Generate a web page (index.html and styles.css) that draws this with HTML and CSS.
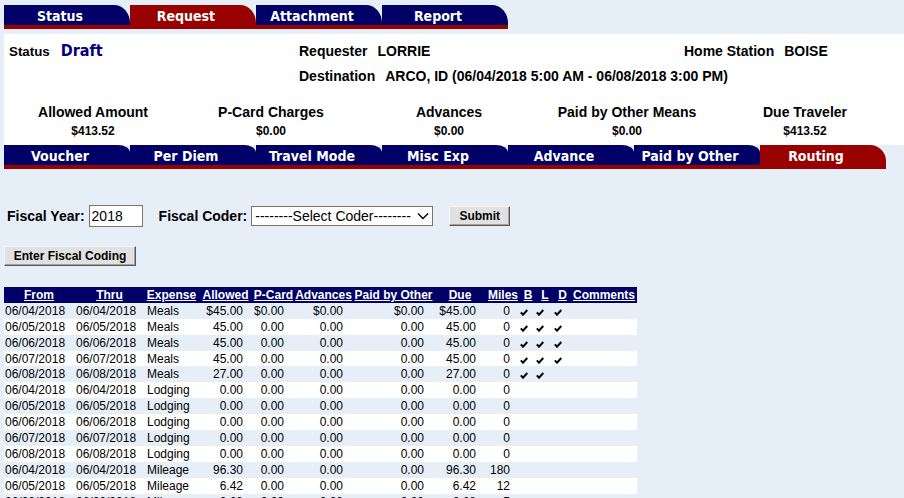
FILE: index.html
```html
<!DOCTYPE html>
<html>
<head>
<meta charset="utf-8">
<title>Travel Request</title>
<link rel="stylesheet" href="styles.css">
</head>
<body>
<nav class="tabs top-tabs">
  <a class="tab">Status</a>
  <a class="tab active">Request</a>
  <a class="tab">Attachment</a>
  <a class="tab">Report</a>
</nav>

<section class="panel">
  <div class="info">
    <div class="status"><span class="status-lbl">Status</span><span class="draft">Draft</span></div>
    <div class="field"><span>Requester</span><span class="val">LORRIE</span></div>
    <div class="field"><span>Home Station</span><span class="val">BOISE</span></div>
    <div></div>
    <div class="field dest"><span>Destination</span><span class="val">ARCO, ID (06/04/2018 5:00 AM - 06/08/2018 3:00 PM)</span></div>
  </div>
  <div class="summary">
    <div class="sum"><div class="sum-lbl">Allowed Amount</div><div class="sum-val">$413.52</div></div>
    <div class="sum"><div class="sum-lbl">P-Card Charges</div><div class="sum-val">$0.00</div></div>
    <div class="sum"><div class="sum-lbl">Advances</div><div class="sum-val">$0.00</div></div>
    <div class="sum"><div class="sum-lbl">Paid by Other Means</div><div class="sum-val">$0.00</div></div>
    <div class="sum"><div class="sum-lbl">Due Traveler</div><div class="sum-val">$413.52</div></div>
  </div>
</section>

<nav class="tabs sub-tabs">
  <a class="tab">Voucher</a>
  <a class="tab">Per Diem</a>
  <a class="tab">Travel Mode</a>
  <a class="tab">Misc Exp</a>
  <a class="tab">Advance</a>
  <a class="tab">Paid by Other</a>
  <a class="tab active">Routing</a>
</nav>

<form class="fiscal">
  <label class="flbl" for="fy">Fiscal Year:</label>
  <input id="fy" class="fy" type="text" value="2018">
  <label class="flbl coder-lbl" for="coder">Fiscal Coder:</label>
  <span class="select-wrap">
    <select id="coder" class="coder"><option>--------Select Coder--------</option></select>
    <svg class="chev" width="12" height="8" viewBox="0 0 12 8"><path d="M1 1.5 L6 6.5 L11 1.5" fill="none" stroke="#000" stroke-width="1.4"/></svg>
  </span>
  <button type="button" class="btn submit">Submit</button>
</form>

<button type="button" class="btn enter">Enter Fiscal Coding</button>

<table class="grid">
  <colgroup>
    <col style="width:70px"><col style="width:71px"><col style="width:53px"><col style="width:55px">
    <col style="width:41px"><col style="width:59px"><col style="width:81px"><col style="width:52px">
    <col style="width:34px"><col style="width:16px"><col style="width:18px"><col style="width:17px"><col style="width:66px">
  </colgroup>
  <thead>
    <tr>
      <th><a>From</a></th><th><a>Thru</a></th><th><a>Expense</a></th><th><a>Allowed</a></th>
      <th><a>P-Card</a></th><th><a>Advances</a></th><th><a>Paid by Other</a></th><th><a>Due</a></th>
      <th><a>Miles</a></th><th><a>B</a></th><th><a>L</a></th><th><a>D</a></th><th><a>Comments</a></th>
    </tr>
  </thead>
  <tbody>
    <tr><td class="d1">06/04/2018</td><td class="d2">06/04/2018</td><td class="t">Meals</td><td class="n">$45.00</td><td class="n">$0.00</td><td class="n">$0.00</td><td class="n">$0.00</td><td class="n">$45.00</td><td class="n">0</td><td class="c"><svg class="ck" width="8" height="7" viewBox="0 0 8 7"><path d="M0.8 3.4 L3 5.7 L7.3 1" fill="none" stroke="#000" stroke-width="2"/></svg></td><td class="c"><svg class="ck" width="8" height="7" viewBox="0 0 8 7"><path d="M0.8 3.4 L3 5.7 L7.3 1" fill="none" stroke="#000" stroke-width="2"/></svg></td><td class="c"><svg class="ck" width="8" height="7" viewBox="0 0 8 7"><path d="M0.8 3.4 L3 5.7 L7.3 1" fill="none" stroke="#000" stroke-width="2"/></svg></td><td></td></tr>
    <tr><td class="d1">06/05/2018</td><td class="d2">06/05/2018</td><td class="t">Meals</td><td class="n">45.00</td><td class="n">0.00</td><td class="n">0.00</td><td class="n">0.00</td><td class="n">45.00</td><td class="n">0</td><td class="c"><svg class="ck" width="8" height="7" viewBox="0 0 8 7"><path d="M0.8 3.4 L3 5.7 L7.3 1" fill="none" stroke="#000" stroke-width="2"/></svg></td><td class="c"><svg class="ck" width="8" height="7" viewBox="0 0 8 7"><path d="M0.8 3.4 L3 5.7 L7.3 1" fill="none" stroke="#000" stroke-width="2"/></svg></td><td class="c"><svg class="ck" width="8" height="7" viewBox="0 0 8 7"><path d="M0.8 3.4 L3 5.7 L7.3 1" fill="none" stroke="#000" stroke-width="2"/></svg></td><td></td></tr>
    <tr><td class="d1">06/06/2018</td><td class="d2">06/06/2018</td><td class="t">Meals</td><td class="n">45.00</td><td class="n">0.00</td><td class="n">0.00</td><td class="n">0.00</td><td class="n">45.00</td><td class="n">0</td><td class="c"><svg class="ck" width="8" height="7" viewBox="0 0 8 7"><path d="M0.8 3.4 L3 5.7 L7.3 1" fill="none" stroke="#000" stroke-width="2"/></svg></td><td class="c"><svg class="ck" width="8" height="7" viewBox="0 0 8 7"><path d="M0.8 3.4 L3 5.7 L7.3 1" fill="none" stroke="#000" stroke-width="2"/></svg></td><td class="c"><svg class="ck" width="8" height="7" viewBox="0 0 8 7"><path d="M0.8 3.4 L3 5.7 L7.3 1" fill="none" stroke="#000" stroke-width="2"/></svg></td><td></td></tr>
    <tr><td class="d1">06/07/2018</td><td class="d2">06/07/2018</td><td class="t">Meals</td><td class="n">45.00</td><td class="n">0.00</td><td class="n">0.00</td><td class="n">0.00</td><td class="n">45.00</td><td class="n">0</td><td class="c"><svg class="ck" width="8" height="7" viewBox="0 0 8 7"><path d="M0.8 3.4 L3 5.7 L7.3 1" fill="none" stroke="#000" stroke-width="2"/></svg></td><td class="c"><svg class="ck" width="8" height="7" viewBox="0 0 8 7"><path d="M0.8 3.4 L3 5.7 L7.3 1" fill="none" stroke="#000" stroke-width="2"/></svg></td><td class="c"><svg class="ck" width="8" height="7" viewBox="0 0 8 7"><path d="M0.8 3.4 L3 5.7 L7.3 1" fill="none" stroke="#000" stroke-width="2"/></svg></td><td></td></tr>
    <tr><td class="d1">06/08/2018</td><td class="d2">06/08/2018</td><td class="t">Meals</td><td class="n">27.00</td><td class="n">0.00</td><td class="n">0.00</td><td class="n">0.00</td><td class="n">27.00</td><td class="n">0</td><td class="c"><svg class="ck" width="8" height="7" viewBox="0 0 8 7"><path d="M0.8 3.4 L3 5.7 L7.3 1" fill="none" stroke="#000" stroke-width="2"/></svg></td><td class="c"><svg class="ck" width="8" height="7" viewBox="0 0 8 7"><path d="M0.8 3.4 L3 5.7 L7.3 1" fill="none" stroke="#000" stroke-width="2"/></svg></td><td class="c"></td><td></td></tr>
    <tr><td class="d1">06/04/2018</td><td class="d2">06/04/2018</td><td class="t">Lodging</td><td class="n">0.00</td><td class="n">0.00</td><td class="n">0.00</td><td class="n">0.00</td><td class="n">0.00</td><td class="n">0</td><td></td><td></td><td></td><td></td></tr>
    <tr><td class="d1">06/05/2018</td><td class="d2">06/05/2018</td><td class="t">Lodging</td><td class="n">0.00</td><td class="n">0.00</td><td class="n">0.00</td><td class="n">0.00</td><td class="n">0.00</td><td class="n">0</td><td></td><td></td><td></td><td></td></tr>
    <tr><td class="d1">06/06/2018</td><td class="d2">06/06/2018</td><td class="t">Lodging</td><td class="n">0.00</td><td class="n">0.00</td><td class="n">0.00</td><td class="n">0.00</td><td class="n">0.00</td><td class="n">0</td><td></td><td></td><td></td><td></td></tr>
    <tr><td class="d1">06/07/2018</td><td class="d2">06/07/2018</td><td class="t">Lodging</td><td class="n">0.00</td><td class="n">0.00</td><td class="n">0.00</td><td class="n">0.00</td><td class="n">0.00</td><td class="n">0</td><td></td><td></td><td></td><td></td></tr>
    <tr><td class="d1">06/08/2018</td><td class="d2">06/08/2018</td><td class="t">Lodging</td><td class="n">0.00</td><td class="n">0.00</td><td class="n">0.00</td><td class="n">0.00</td><td class="n">0.00</td><td class="n">0</td><td></td><td></td><td></td><td></td></tr>
    <tr><td class="d1">06/04/2018</td><td class="d2">06/04/2018</td><td class="t">Mileage</td><td class="n">96.30</td><td class="n">0.00</td><td class="n">0.00</td><td class="n">0.00</td><td class="n">96.30</td><td class="n">180</td><td></td><td></td><td></td><td></td></tr>
    <tr><td class="d1">06/05/2018</td><td class="d2">06/05/2018</td><td class="t">Mileage</td><td class="n">6.42</td><td class="n">0.00</td><td class="n">0.00</td><td class="n">0.00</td><td class="n">6.42</td><td class="n">12</td><td></td><td></td><td></td><td></td></tr>
    <tr><td class="d1">06/06/2018</td><td class="d2">06/06/2018</td><td class="t">Mileage</td><td class="n">2.68</td><td class="n">0.00</td><td class="n">0.00</td><td class="n">0.00</td><td class="n">2.68</td><td class="n">5</td><td></td><td></td><td></td><td></td></tr>
  </tbody>
</table>
</body>
</html>
```

FILE: styles.css
```css
* { box-sizing: border-box; }
html, body { margin: 0; }
body {
  background: #e6eef8;
  font-family: "Liberation Sans", Arial, sans-serif;
  color: #000;
  padding: 5px 0 0 4px;
}

/* tab bars */
.tabs {
  display: flex;
  border-bottom: 4px solid #990000;
}
.top-tabs { width: 504px; }
.sub-tabs { width: 882px; }
.tab {
  width: 126px;
  height: 20px;
  flex: none;
  background: #000066;
  color: #fff;
  font-family: "DejaVu Sans Condensed", "DejaVu Sans", sans-serif;
  font-stretch: condensed;
  font-weight: bold;
  font-size: 14px;
  line-height: 22px;
  text-align: center;
  padding-right: 14px;
  text-decoration: none;
  white-space: nowrap;
}
.top-tabs .tab { border-top-right-radius: 16px 18px; }
.sub-tabs .tab { border-top-right-radius: 12px 8px; }
.tab.active { background: #990000; }
.sub-tabs .tab.active { border-top-right-radius: 16px 16px; }

/* white info panel */
.panel {
  background: #fff;
  margin-top: 5px;
}
.info {
  display: grid;
  grid-template-columns: 290px 385px auto;
  grid-template-rows: 33px 18px;
  align-items: center;
  padding-left: 5px;
  font-size: 14px;
  font-weight: bold;
  line-height: 16px;
}
.status { display: flex; align-items: baseline; padding-top: 1px; }
.status-lbl { font-size: 13.33px; }
.draft {
  margin-left: 11px;
  font-family: "DejaVu Sans Condensed", "DejaVu Sans", sans-serif;
  font-stretch: condensed;
  font-size: 16px;
  color: #000080;
}
.field .val { margin-left: 10px; }
.dest { grid-column: 2 / 4; white-space: nowrap; }

.summary {
  display: grid;
  grid-template-columns: repeat(5, 178px);
  padding: 19px 0 7px;
  text-align: center;
  font-weight: bold;
}
.sum-lbl { font-size: 14px; line-height: 16px; }
.sum-val { font-size: 12px; line-height: 14px; margin-top: 4px; }

/* fiscal form */
.fiscal {
  display: flex;
  align-items: center;
  height: 24px;
  margin: 35px 0 0;
  padding-left: 3px;
}
.flbl { font-size: 14px; font-weight: bold; }
.fy {
  width: 54px;
  height: 22px;
  margin: 0 0 0 4px;
  padding: 0 2px;
  border: 1px solid #767676;
  font: 14px "Liberation Sans", Arial, sans-serif;
  background: #fff;
}
.coder-lbl { margin-left: 16px; }
.select-wrap { position: relative; margin-left: 4px; display: block; height: 20px; }
.coder {
  appearance: none;
  -webkit-appearance: none;
  width: 182px;
  height: 20px;
  margin: 0;
  padding: 0 0 0 3px;
  border: 1px solid #767676;
  border-radius: 0;
  background: #fff;
  color: #000;
  font: 14px "Liberation Sans", Arial, sans-serif;
}
.chev { position: absolute; right: 4px; top: 6px; pointer-events: none; }

.btn {
  height: 20px;
  padding: 0;
  background: #e1e1e1;
  border: 1px solid;
  border-color: #f4f4f4 #5a5a5a #5a5a5a #f4f4f4;
  box-shadow: inset -1px -1px 0 #a0a0a0;
  font: bold 12px "Liberation Sans", Arial, sans-serif;
  color: #000;
}
.submit { width: 61px; margin-left: 16px; }
.enter { display: block; width: 132px; margin-top: 18px; }

/* table */
.grid {
  margin-top: 21px;
  width: 633px;
  table-layout: fixed;
  border-collapse: collapse;
  font-size: 12px;
}
.grid th {
  background: #000066;
  color: #fff;
  font-weight: bold;
  text-align: center;
  padding: 0;
  height: 15.9px;
  line-height: 14px;
  white-space: nowrap;
  overflow: hidden;
}
.grid th a { color: #fff; text-decoration: underline; }
.grid td {
  padding: 0;
  height: 15.9px;
  line-height: 14px;
  white-space: nowrap;
}
.grid tbody tr:nth-child(even) td { background: #fff; }
.grid .d1 { padding-left: 1px; }
.grid .d2 { padding-left: 2px; }
.grid .t { padding-left: 2px; }
.grid .n { text-align: right; padding-right: 10px; }
.grid .c { padding-left: 0; }
.ck { display: block; margin-top: 3px; }
```
